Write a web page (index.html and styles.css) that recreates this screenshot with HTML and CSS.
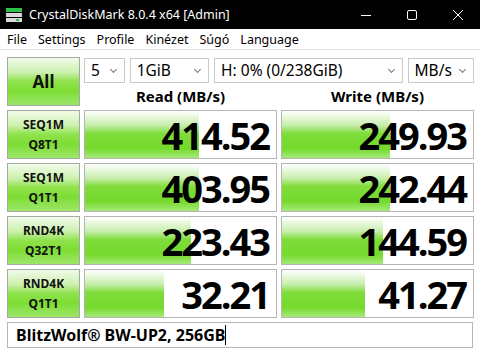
FILE: index.html
```html
<!DOCTYPE html>
<html lang="en">
<head>
  <meta charset="UTF-8">
  <title>CrystalDiskMark 8.0.4 x64 [Admin]</title>
  <link rel="stylesheet" href="styles.css">
</head>
<body>
  <div class="window">
    <div class="titlebar">
      <svg class="app-icon" width="16" height="16" viewBox="0 0 16 16">
        <rect x="0" y="1" width="16" height="4" fill="#2fc24a"/>
        <rect x="0" y="6" width="16" height="4" fill="#d8d8d8"/>
        <rect x="0" y="11" width="16" height="4" fill="#d8d8d8"/>
        <rect x="10" y="12" width="3" height="2" fill="#2fc24a"/>
      </svg>
      <span class="title">CrystalDiskMark 8.0.4 x64 [Admin]</span>
      <div class="controls">
        <svg width="12" height="12" viewBox="0 0 12 12"><path d="M1 6.5h10" stroke="#fff" stroke-width="1"/></svg>
        <svg width="12" height="12" viewBox="0 0 12 12"><rect x="1.5" y="1.5" width="9" height="9" rx="1.5" fill="none" stroke="#fff" stroke-width="1"/></svg>
        <svg width="12" height="12" viewBox="0 0 12 12"><path d="M1 1l10 10M11 1L1 11" stroke="#fff" stroke-width="1"/></svg>
      </div>
    </div>

    <div class="menubar">
      <span>File</span>
      <span>Settings</span>
      <span>Profile</span>
      <span>Kinézet</span>
      <span>Súgó</span>
      <span>Language</span>
    </div>

    <div class="content">
      <div class="grid">
        <div class="btn btn-all">All</div>
        <div class="top">
          <div class="selects">
            <div class="select s-count">5<i class="chev"></i></div>
            <div class="select s-size">1GiB<i class="chev"></i></div>
            <div class="select s-drive">H: 0% (0/238GiB)<i class="chev"></i></div>
            <div class="select s-unit">MB/s<i class="chev"></i></div>
          </div>
          <div class="heads">
            <div class="head">Read (MB/s)</div>
            <div class="head">Write (MB/s)</div>
          </div>
        </div>

        <div class="btn">SEQ1M<br>Q8T1</div>
        <div class="result"><div class="bar" style="width: 114px"></div><span>414.52</span></div>
        <div class="result"><div class="bar" style="width: 108px"></div><span>249.93</span></div>

        <div class="btn">SEQ1M<br>Q1T1</div>
        <div class="result"><div class="bar" style="width: 114px"></div><span>403.95</span></div>
        <div class="result"><div class="bar" style="width: 108px"></div><span>242.44</span></div>

        <div class="btn">RND4K<br>Q32T1</div>
        <div class="result"><div class="bar" style="width: 106px"></div><span>223.43</span></div>
        <div class="result"><div class="bar" style="width: 101px"></div><span>144.59</span></div>

        <div class="btn">RND4K<br>Q1T1</div>
        <div class="result"><div class="bar" style="width: 79px"></div><span>32.21</span></div>
        <div class="result"><div class="bar" style="width: 83px"></div><span>41.27</span></div>
      </div>

      <div class="comment">BlitzWolf® BW-UP2, 256GB<i class="caret"></i></div>
    </div>
  </div>
</body>
</html>
```

FILE: styles.css
```css
body {
  margin: 0;
  background: #fff;
  font-family: "Noto Sans", "Open Sans", sans-serif;
  color: #000;
}

.window {
  width: 480px;
  height: 351px;
  overflow: hidden;
  background: #fff;
}

.titlebar {
  height: 29px;
  background: #000;
  display: flex;
  align-items: center;
  color: #fff;
}

.app-icon {
  margin-left: 6px;
  margin-right: 7px;
}

.title {
  font-size: 12.5px;
}

.controls {
  margin-left: auto;
  display: flex;
  gap: 34px;
  margin-right: 16px;
}

.menubar {
  height: 20px;
  display: flex;
  align-items: center;
  gap: 11px;
  padding-left: 7px;
  font-size: 12.5px;
  border-bottom: 1px solid #e3e3e3;
}

.content {
  padding: 7px 7px 0 7px;
}

.grid {
  display: grid;
  grid-template-columns: 73px 193px 193px;
  grid-template-rows: 49px repeat(4, 49px);
  column-gap: 4px;
  row-gap: 4px;
}

.btn {
  border: 1px solid #a7a7a7;
  background: linear-gradient(#f1fbe9 0%, #cdf1b0 30%, #8fe24c 50%, #7ddd33 70%, #9de66a 100%);
  display: flex;
  align-items: center;
  justify-content: center;
  text-align: center;
  font-weight: bold;
  font-size: 12px;
  line-height: 20px;
  color: #111;
}

.btn-all {
  font-size: 17px;
}

.top {
  grid-column: 2 / 4;
  display: flex;
  flex-direction: column;
}

.selects {
  display: flex;
  gap: 5px;
  margin-top: 1px;
}

.select {
  position: relative;
  height: 23px;
  border: 1px solid #c9c9c9;
  background: #fff;
  font-size: 15.5px;
  line-height: 23px;
  padding-left: 6px;
  box-sizing: content-box;
}

.s-count { width: 33px; }
.s-size { width: 72px; }
.s-drive { width: 182px; }
.s-unit { width: 59px; }

.chev {
  position: absolute;
  right: 8px;
  top: 8px;
  width: 4px;
  height: 4px;
  border-right: 1px solid #777;
  border-bottom: 1px solid #777;
  transform: rotate(45deg);
}

.heads {
  display: grid;
  grid-template-columns: 193px 193px;
  column-gap: 4px;
  flex: 1;
  align-items: center;
}

.head {
  text-align: center;
  font-weight: bold;
  font-size: 15px;
  padding-top: 3px;
}

.result {
  position: relative;
  border: 1px solid #b5b5b5;
  background: #fff;
  display: flex;
  align-items: center;
  justify-content: flex-end;
  padding-right: 7px;
}

.bar {
  position: absolute;
  left: 0;
  top: 0;
  bottom: 0;
  background: linear-gradient(#ffffff 0%, #c8eeae 30%, #7fdc3a 48%, #75da2c 80%, #a6e97a 100%);
}

.result span {
  position: relative;
  font-family: "Open Sans", sans-serif;
  font-weight: bold;
  font-size: 38px;
  letter-spacing: -2px;
  line-height: 1;
}

.comment {
  margin-top: 4px;
  height: 24px;
  border: 1px solid #b5b5b5;
  font-weight: bold;
  font-size: 16px;
  line-height: 24px;
  padding-left: 8px;
  display: flex;
  align-items: center;
}

.caret {
  display: inline-block;
  width: 1px;
  height: 20px;
  background: #000;
}
```
